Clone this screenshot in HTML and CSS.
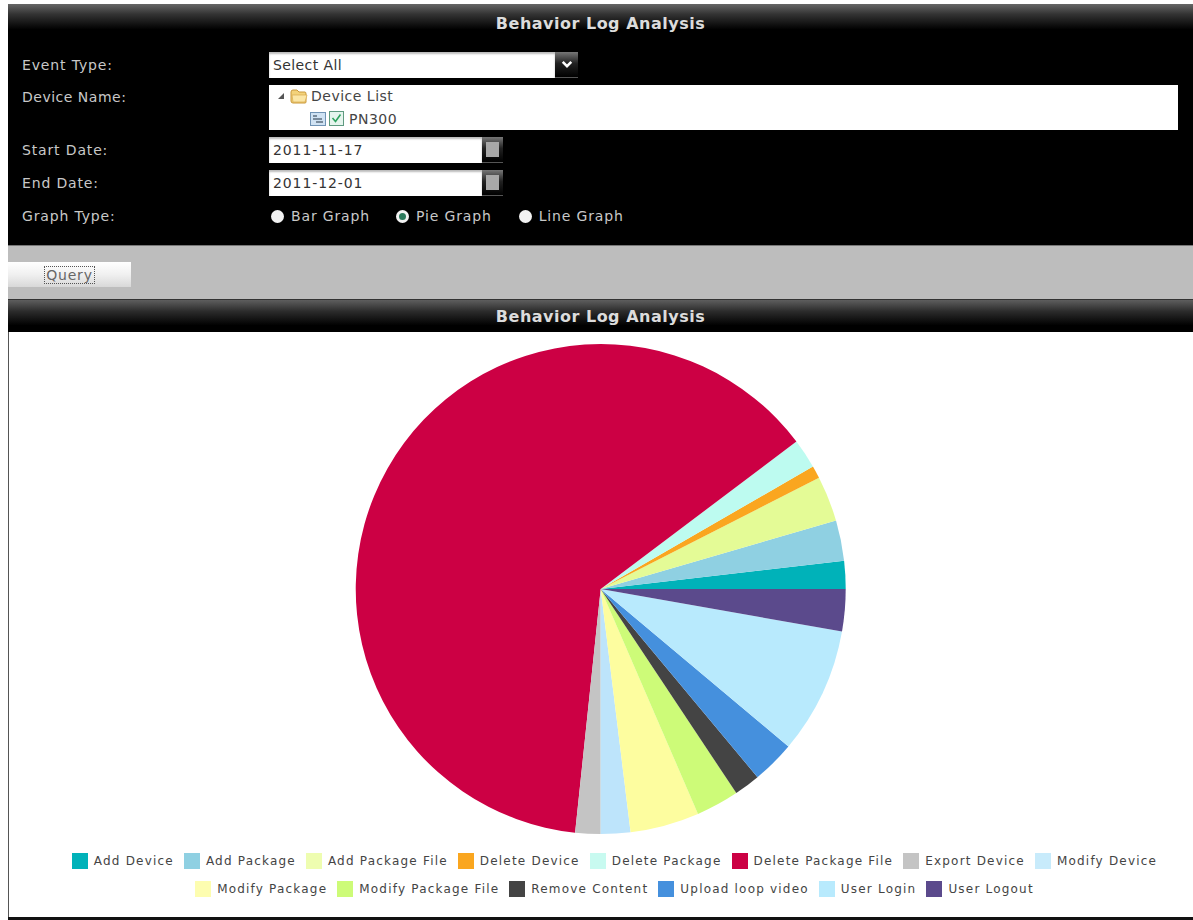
FILE: index.html
```html
<!DOCTYPE html>
<html lang="en">
<head>
    <meta charset="UTF-8">
    <meta name="viewport" content="width=device-width, initial-scale=1.0">
    <title>Behavior Log Analysis</title>
    <link rel="stylesheet" href="styles.css">
</head>
<body>
    <div class="panel">
        <div class="panel-title">Behavior Log Analysis</div>
        <div class="form-grid">
            <div class="form-label">Event Type:</div>
            <div class="combo">
                <div class="combo-input plain">Select All</div>
                <div class="combo-button">
                    <svg width="12" height="9" viewBox="0 0 14 10"><path d="M2 2 L7 7 L12 2" fill="none" stroke="#fff" stroke-width="3"/></svg>
                </div>
            </div>

            <div class="form-label row-device">Device Name:</div>
            <div class="tree">
                <div class="tree-row">
                    <svg class="tree-arrow" width="8" height="8" viewBox="0 0 8 8"><path d="M7 1 V7 H1 Z" fill="#555"/></svg>
                    <svg width="18" height="15" viewBox="0 0 18 15"><path d="M1 3 Q1 1 3 1 H7 L9 3 H15 Q16 3 16 5 V13 Q16 14 15 14 H3 Q1 14 1 12 Z" fill="#f3d27a" stroke="#c9983a"/><path d="M2 6 H17 L15 13 H3 Z" fill="#fbe6a6" stroke="#d9ab4e" stroke-width=".7"/></svg>
                    <span>Device List</span>
                </div>
                <div class="tree-row tree-child">
                    <svg width="16" height="15" viewBox="0 0 16 15"><rect x=".5" y="1.5" width="15" height="13" fill="#cfe2f3" stroke="#6f93b5"/><path d="M3 5 H7 M3 8 H12 M6 11 H13" stroke="#234" stroke-width="1.2"/></svg>
                    <svg width="15" height="15" viewBox="0 0 15 15"><rect x=".5" y=".5" width="14" height="14" fill="#e6f5ee" stroke="#5f9a80"/><path d="M3.5 7 L6.5 10.5 L11.5 3.5" fill="none" stroke="#2fa35f" stroke-width="1.6"/></svg>
                    <span>PN300</span>
                </div>
            </div>

            <div class="form-label">Start Date:</div>
            <div class="combo date">
                <div class="combo-input">2011-11-17</div>
                <div class="combo-button"><span class="cal-icon"></span></div>
            </div>

            <div class="form-label">End Date:</div>
            <div class="combo date">
                <div class="combo-input">2011-12-01</div>
                <div class="combo-button"><span class="cal-icon"></span></div>
            </div>

            <div class="form-label">Graph Type:</div>
            <div class="radios">
                <label class="radio radio-bar"><span class="radio-dot"></span>Bar Graph</label>
                <label class="radio radio-pie"><span class="radio-dot checked"></span>Pie Graph</label>
                <label class="radio"><span class="radio-dot"></span>Line Graph</label>
            </div>
        </div>
    </div>

    <div class="toolbar">
        <button class="query-button"><span>Query</span></button>
    </div>

    <div class="panel-title second">Behavior Log Analysis</div>
    <div class="chart-box">
        <svg class="pie" width="500" height="494" viewBox="350 342 500 494">
            <path d="M601.7 590 L846.7 590 A245 245 0 0 0 845.1 561.8 Z" fill="#00b2b9"/>
            <path d="M601.7 590 L845.1 561.8 A245 245 0 0 0 837 521.6 Z" fill="#8fd0e2"/>
            <path d="M601.7 590 L837 521.6 A245 245 0 0 0 820 478.8 Z" fill="#e4fb96"/>
            <path d="M601.7 590 L820 478.8 A245 245 0 0 0 813.9 467.5 Z" fill="#faa61f"/>
            <path d="M601.7 590 L813.9 467.5 A245 245 0 0 0 797.4 442.6 Z" fill="#bdfbf0"/>
            <path d="M601.7 590 L797.4 442.6 A245 245 0 1 0 576.1 833.7 Z" fill="#cc0044"/>
            <path d="M601.7 590 L576.1 833.7 A245 245 0 0 0 601.7 835 Z" fill="#c4c4c4"/>
            <path d="M601.7 590 L601.7 835 A245 245 0 0 0 631.6 833.2 Z" fill="#bde4fb"/>
            <path d="M601.7 590 L631.6 833.2 A245 245 0 0 0 699 814.9 Z" fill="#fdfd9f"/>
            <path d="M601.7 590 L699 814.9 A245 245 0 0 0 737.3 794.1 Z" fill="#cdfb78"/>
            <path d="M601.7 590 L737.3 794.1 A245 245 0 0 0 758.5 778.2 Z" fill="#444444"/>
            <path d="M601.7 590 L758.5 778.2 A245 245 0 0 0 789.4 747.5 Z" fill="#4590dd"/>
            <path d="M601.7 590 L789.4 747.5 A245 245 0 0 0 843 632.5 Z" fill="#b8eafd"/>
            <path d="M601.7 590 L843 632.5 A245 245 0 0 0 846.7 590 Z" fill="#5b4a8c"/>
        </svg>
        <div class="legend">
            <div class="legend-row">
                <span class="legend-item"><i class="swatch c-teal"></i>Add Device</span>
                <span class="legend-item"><i class="swatch c-sky"></i>Add Package</span>
                <span class="legend-item"><i class="swatch c-lime"></i>Add Package File</span>
                <span class="legend-item"><i class="swatch c-orange"></i>Delete Device</span>
                <span class="legend-item"><i class="swatch c-mint"></i>Delete Package</span>
                <span class="legend-item"><i class="swatch c-red"></i>Delete Package File</span>
                <span class="legend-item"><i class="swatch c-gray"></i>Export Device</span>
                <span class="legend-item"><i class="swatch c-ice"></i>Modify Device</span>
            </div>
            <div class="legend-row">
                <span class="legend-item"><i class="swatch c-yellow"></i>Modify Package</span>
                <span class="legend-item"><i class="swatch c-green"></i>Modify Package File</span>
                <span class="legend-item"><i class="swatch c-dark"></i>Remove Content</span>
                <span class="legend-item"><i class="swatch c-blue"></i>Upload loop video</span>
                <span class="legend-item"><i class="swatch c-pale"></i>User Login</span>
                <span class="legend-item"><i class="swatch c-purple"></i>User Logout</span>
            </div>
        </div>
    </div>
    <div class="bottom-bar"></div>
</body>
</html>
```

FILE: styles.css
```css
body {
    margin: 0;
    padding: 4px 0 0 8px;
    background-color: #fff;
    font-family: "DejaVu Sans", Verdana, sans-serif;
    font-size: 14px;
    letter-spacing: .5px;
    height: 920px;
    overflow: hidden;
    box-sizing: border-box;
}

.panel {
    background-color: #000;
    height: 242px;
    border-bottom: 1px solid #777;
    box-sizing: border-box;
}

.panel-title {
    height: 34px;
    line-height: 39px;
    text-align: center;
    color: #dcdcdc;
    font-weight: bold;
    font-size: 16px;
    background: linear-gradient(to bottom, #666 0%, #333 30%, #000 75%);
}

.panel-title.second {
    height: 32px;
    line-height: 34px;
    border-top: 1px solid #333;
    background: linear-gradient(to bottom, #5e5e5e 0%, #2c2c2c 35%, #000 80%);
}

.form-grid {
    display: grid;
    grid-template-columns: 247px 909px;
    grid-template-rows: 26px 45px 26px 26px 26px;
    row-gap: 7px;
    padding: 14px 0 0 14px;
}

.form-label {
    color: #c8c8c8;
    line-height: 26px;
    letter-spacing: .85px;
}

.row-device {
    line-height: 24px;
    letter-spacing: .5px;
}

.combo {
    display: flex;
    width: 309px;
}

.combo.date {
    width: 234px;
}

.combo-input {
    flex: 1;
    background-color: #fff;
    color: #333;
    line-height: 26px;
    padding-left: 4px;
    letter-spacing: .9px;
    box-shadow: inset 0 2px 2px #bbb;
}

.combo-input.plain {
    letter-spacing: .4px;
}

.combo-button {
    width: 23px;
    height: 25px;
    display: flex;
    align-items: center;
    justify-content: center;
    background: linear-gradient(to bottom, #777 0%, #222 45%, #000 100%);
    border-bottom: 1px solid #555;
}

.date .combo-button {
    width: 21px;
}

.cal-icon {
    width: 13px;
    height: 15px;
    background-color: #a8a8a8;
}

.tree {
    background-color: #fff;
    color: #444;
    box-sizing: border-box;
}

.tree-row {
    display: flex;
    align-items: center;
    gap: 3px;
    height: 22px;
    padding-left: 8px;
}

.tree-arrow {
    margin-right: 2px;
}

.tree-child {
    padding-left: 41px;
    height: 23px;
    gap: 3px;
}

.tree-child span {
    margin-left: 2px;
}

.radios {
    display: flex;
    align-items: center;
    color: #c8c8c8;
    padding-left: 2px;
    letter-spacing: .85px;
}

.radio {
    display: flex;
    align-items: center;
    gap: 7px;
}

.radio-bar {
    margin-right: 26px;
}

.radio-pie {
    margin-right: 27px;
}

.radio-dot {
    width: 13px;
    height: 13px;
    border-radius: 50%;
    background-color: #f2f2f2;
    box-sizing: border-box;
}

.radio-dot.checked {
    border: 3px solid #f2f2f2;
    background-color: #2c7a5c;
}

.toolbar {
    height: 53px;
    padding-top: 16px;
    background-color: #bdbdbd;
    box-sizing: border-box;
}

.query-button {
    display: block;
    width: 123px;
    height: 25px;
    padding: 0;
    border: none;
    background: linear-gradient(to bottom, #fff 0%, #f0f0f0 50%, #d8d8d8 100%);
    color: #666;
    font-family: inherit;
    font-size: 14px;
    letter-spacing: .8px;
}

.query-button span {
    display: inline-block;
    padding: 0 1px;
    border: 1px dotted #555;
}

.chart-box {
    height: 585px;
    display: flex;
    flex-direction: column;
    align-items: center;
    border-left: 1px solid #555;
    box-sizing: border-box;
    background-color: #fff;
}

.pie {
    display: block;
    margin-top: 9px;
    margin-right: 4px;
}

.legend {
    margin-top: 17px;
    margin-left: 27px;
    color: #444;
    font-size: 12px;
    letter-spacing: 1.2px;
}

.legend-row {
    display: flex;
    justify-content: center;
    gap: 10px;
    height: 28px;
    white-space: nowrap;
}

.legend-item {
    display: flex;
    align-items: center;
    gap: 6px;
    height: 18px;
}

.swatch {
    display: block;
    width: 16px;
    height: 16px;
}

.c-teal { background-color: #00b2b9; }
.c-sky { background-color: #8fd0e2; }
.c-lime { background-color: #eefdb0; }
.c-orange { background-color: #faa61f; }
.c-mint { background-color: #c8faf0; }
.c-red { background-color: #cc0044; }
.c-gray { background-color: #c4c4c4; }
.c-ice { background-color: #c8ebfb; }
.c-yellow { background-color: #fdfdb0; }
.c-green { background-color: #cdfb78; }
.c-dark { background-color: #444; }
.c-blue { background-color: #4590dd; }
.c-pale { background-color: #b8eafd; }
.c-purple { background-color: #5b4a8c; }

.bottom-bar {
    height: 3px;
    background-color: #111;
}
```
